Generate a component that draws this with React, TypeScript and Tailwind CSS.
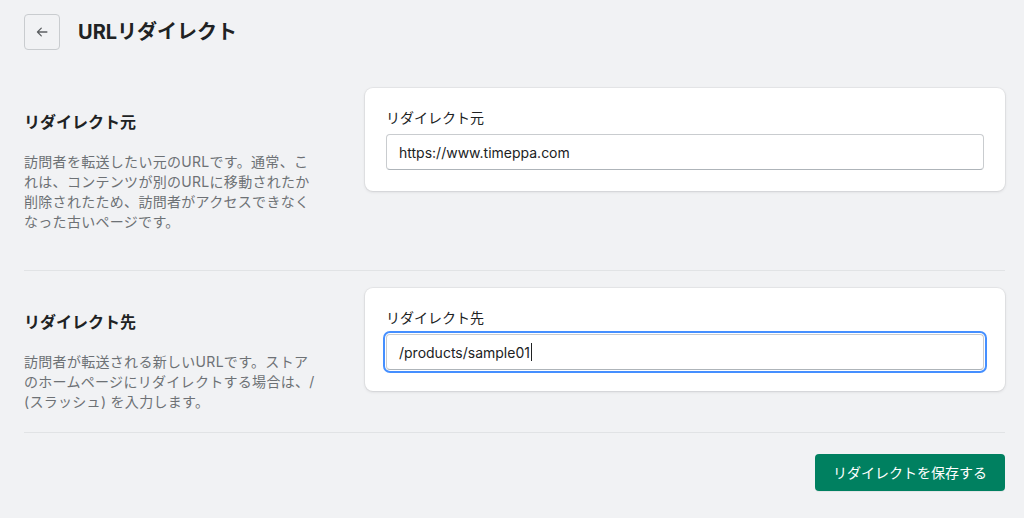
import * as React from "react";

const FONT = { fontFamily: "Inter, 'Noto Sans CJK JP', sans-serif" };

function BackButton() {
  return (
    <button
      type="button"
      className="w-[36px] h-[36px] flex items-center justify-center rounded-[4px] border border-[#c9cccf] bg-[#f1f2f4] text-[#5c5f62]"
    >
      <svg width="14" height="14" viewBox="0 0 20 20" fill="none">
        <path
          d="M17 10H4M9 4.5 3.5 10 9 15.5"
          stroke="currentColor"
          strokeWidth="1.8"
          strokeLinecap="round"
          strokeLinejoin="round"
        />
      </svg>
    </button>
  );
}

interface SectionProps {
  title: string;
  description: string;
  label: string;
  value: string;
  focused?: boolean;
  className?: string;
}

function AnnotatedSection({ title, description, label, value, focused, className }: SectionProps) {
  return (
    <div className={"flex items-start " + (className ?? "")}>
      {/* Annotation */}
      <div className="w-[341px] pt-[22px]">
        <h2 className="text-[16px] leading-[24px] font-bold text-[#202223]">{title}</h2>
        <p className="mt-[18px] w-[296px] text-[14px] leading-[20px] tracking-[0.3px] text-[#6d7175]">
          {description}
        </p>
      </div>

      {/* Card */}
      <div className="w-[640px] rounded-[8px] bg-white px-[21px] pt-[20px] pb-[21px] shadow-[0_0_0_1px_rgba(63,63,68,0.05),0_1px_3px_0_rgba(63,63,68,0.15)]">
        <label className="block text-[14px] leading-[20px] text-[#202223]">{label}</label>
        <div
          className={
            "mt-[6px] h-[36px] flex items-center px-[12px] rounded-[4px] border border-[#c9cccf] border-b-[#aeb4b9] bg-white text-[14px] text-[#202223] " +
            (focused ? "ring-2 ring-[#458fff] ring-offset-1" : "")
          }
        >
          <span>{value}</span>
          {focused && <span className="ml-[1px] inline-block w-[1px] h-[18px] bg-[#202223]" />}
        </div>
      </div>
    </div>
  );
}

export default function App() {
  return (
    <div className="min-h-screen w-full bg-[#f1f2f4]" style={FONT}>
      <div className="w-[981px] ml-[24px] pt-[14px]">
        {/* Header */}
        <div className="flex items-center gap-[18px] h-[36px]">
          <BackButton />
          <h1 className="text-[20px] font-bold text-[#202223] leading-[28px]">URLリダイレクト</h1>
        </div>

        {/* Redirect from */}
        <AnnotatedSection
          className="pt-[38px] pb-[38px] border-b border-[#e1e3e5]"
          title="リダイレクト元"
          description="訪問者を転送したい元のURLです。通常、これは、コンテンツが別のURLに移動されたか削除されたため、訪問者がアクセスできなくなった古いページです。"
          label="リダイレクト元"
          value="https://www.timeppa.com"
        />

        {/* Redirect to */}
        <AnnotatedSection
          className="pt-[17px] pb-[20px] border-b border-[#e1e3e5]"
          title="リダイレクト先"
          description="訪問者が転送される新しいURLです。ストアのホームページにリダイレクトする場合は、/ (スラッシュ) を入力します。"
          label="リダイレクト先"
          value="/products/sample01"
          focused
        />

        {/* Footer */}
        <div className="flex justify-end pt-[21px]">
          <button
            type="button"
            className="h-[37px] w-[190px] rounded-[4px] bg-[#008060] text-[14px] text-white shadow-[0_1px_0_rgba(0,0,0,0.05)]"
          >
            リダイレクトを保存する
          </button>
        </div>
      </div>
    </div>
  );
}
